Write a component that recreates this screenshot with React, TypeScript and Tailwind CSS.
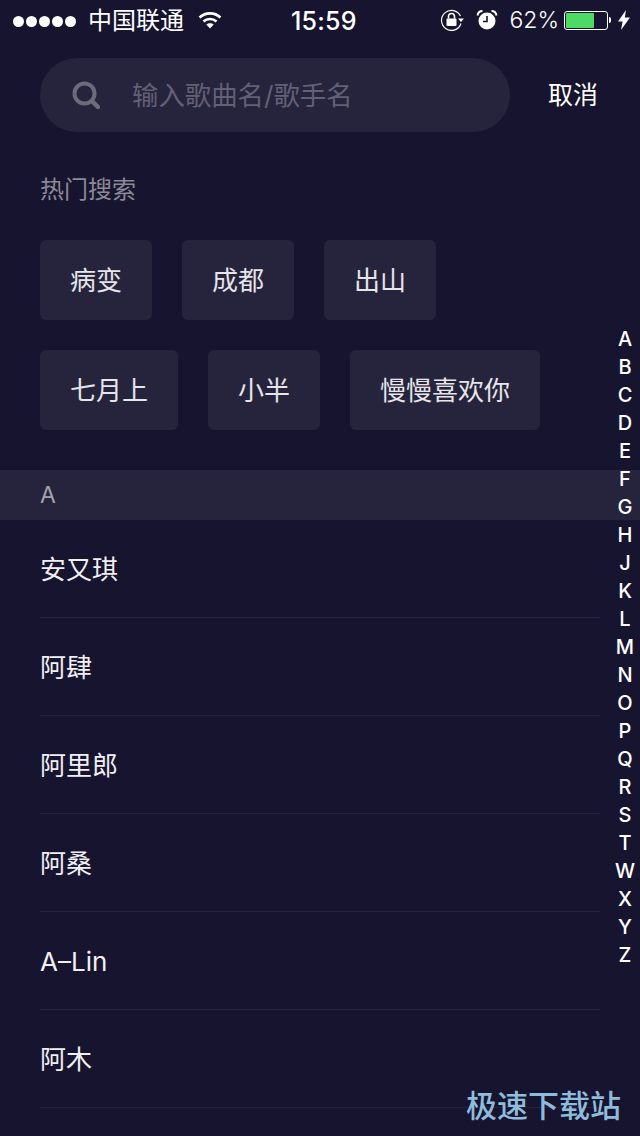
import React from "react";

const font = { fontFamily: 'Inter, "Noto Sans CJK SC", sans-serif' };
const row1 = ["病变", "成都", "出山"];
const row2 = ["七月上", "小半", "慢慢喜欢你"];
const singers = ["安又琪", "阿肆", "阿里郎", "阿桑", "A–Lin", "阿木"];
const letters = "ABCDEFGHJKLMNOPQRSTWXYZ".split("");

function Chip({ t }: { t: string }) {
  return (
    <div className="h-[80px] px-[30px] pt-[2px] flex items-center rounded-[6px] bg-[#26243c] text-[26px] text-[#e6e5ea] leading-none">
      {t}
    </div>
  );
}

function StatusBar() {
  return (
    <div className="h-[40px] flex items-center pl-[13px] pr-[10px] pt-[2px] text-white relative">
      <div className="flex items-center gap-[2px]">
        {[0, 1, 2, 3, 4].map((i) => (
          <span key={i} className="w-[11px] h-[11px] rounded-full bg-white" />
        ))}
      </div>
      <span className="ml-[12px] text-[24px] leading-none">中国联通</span>
      <svg className="ml-[14px] -mt-[2px]" width="24" height="18" viewBox="0 0 24 18" fill="none">
        <path d="M1.5 6.5C7.5 1 16.5 1 22.5 6.5" stroke="white" strokeWidth="2.6" />
        <path d="M5.5 10.5C9 7.2 15 7.2 18.5 10.5" stroke="white" strokeWidth="2.6" />
        <path d="M12 17.5L8.3 13.6C10.3 11.9 13.7 11.9 15.7 13.6Z" fill="white" />
      </svg>
      <span className="absolute left-[291px] text-[25px] leading-none font-medium tracking-[0.2px]">15:59</span>
      <div className="ml-auto flex items-center -mt-[2px]">
        <svg width="25" height="22" viewBox="0 0 25 22" fill="none">
          <path d="M21 14.5A10 10 0 1 1 20.5 7" stroke="white" strokeWidth="1.2" />
          <path d="M18 9.5h6l-3 3.5z" fill="white" />
          <rect x="6.5" y="9.5" width="10" height="7.5" rx="1" fill="white" />
          <path d="M8.5 9.5V7.5a3 3 0 0 1 6 0v2" stroke="white" strokeWidth="1.6" />
        </svg>
        <svg className="ml-[11px]" width="22" height="22" viewBox="0 0 22 22" fill="none">
          <circle cx="11" cy="12" r="8.5" fill="white" />
          <path d="M11 7v5.5H7" stroke="#17142f" strokeWidth="1.6" />
          <path d="M1.5 6.5C2 3.5 4 2 6.5 2M20.5 6.5C20 3.5 18 2 15.5 2" stroke="white" strokeWidth="2" />
        </svg>
        <span className="ml-[11px] text-[23px] leading-none font-light">62%</span>
        <div className="ml-[5px] w-[44px] h-[19px] rounded-[3px] border border-white p-[1px]">
          <div className="h-full w-[28px] rounded-[1px] bg-[#4cd964]" />
        </div>
        <div className="ml-[1px] w-[2px] h-[6px] bg-white rounded-r-full" />
        <svg className="ml-[7px]" width="12" height="20" viewBox="0 0 12 20">
          <path d="M8 0L0 11.5h4.6L3 20l9-12.5H6.8z" fill="white" />
        </svg>
      </div>
    </div>
  );
}

export default function App() {
  return (
    <div style={font} className="relative w-[640px] h-[1136px] overflow-hidden bg-[#17142f]">
      <StatusBar />
      <div className="mt-[18px] pl-[40px] flex items-center">
        <div className="w-[470px] h-[74px] rounded-[37px] bg-[#26243c] flex items-center pl-[32px]">
          <svg width="28" height="28" viewBox="0 0 28 28" fill="none">
            <circle cx="12.5" cy="12.5" r="10" stroke="#6d6b7b" strokeWidth="4" />
            <path d="M20 20L26 26" stroke="#6d6b7b" strokeWidth="4.5" strokeLinecap="round" />
          </svg>
          <span className="ml-[32px] text-[26.4px] leading-none text-[#625f76]">输入歌曲名/歌手名</span>
        </div>
        <span className="ml-[38px] text-[25px] leading-none text-white">取消</span>
      </div>
      <div className="mt-[44px] pl-[40px] h-[28px] flex items-center text-[24px] leading-none text-[#8b8995]">热门搜索</div>
      <div className="mt-[36px] pl-[40px] flex gap-[30px]">
        {row1.map((t) => <Chip key={t} t={t} />)}
      </div>
      <div className="mt-[30px] pl-[40px] flex gap-[30px]">
        {row2.map((t) => <Chip key={t} t={t} />)}
      </div>
      <div className="mt-[40px] h-[50px] bg-[#26243c] pl-[40px] flex items-center text-[23px] leading-none text-[#a5a3b0]">A</div>
      <div className="pl-[40px] pr-[40px]">
        {singers.map((s) => (
          <div key={s} className="h-[98px] pt-[3px] flex items-center border-b border-[#26243c] text-[26px] leading-none text-[#f0eff3]">
            {s}
          </div>
        ))}
      </div>
      <div className="absolute right-[3px] top-[325px] w-[24px] flex flex-col items-center">
        {letters.map((l) => (
          <div key={l} className="h-[28px] flex items-center text-[20px] font-medium leading-none text-white">{l}</div>
        ))}
      </div>
      <div className="absolute left-[466px] top-[1086px] text-[31px] leading-[40px] font-medium text-[#8fbbdc]">极速下载站</div>
    </div>
  );
}
